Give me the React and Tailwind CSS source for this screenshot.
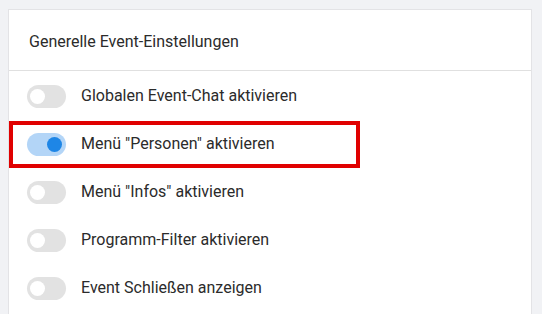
import React, { useState } from 'react';

const settings = [
  { label: 'Globalen Event-Chat aktivieren', on: false },
  { label: 'Menü "Personen" aktivieren', on: true, highlight: true },
  { label: 'Menü "Infos" aktivieren', on: false },
  { label: 'Programm-Filter aktivieren', on: false },
  { label: 'Event Schließen anzeigen', on: false },
];

const Toggle = ({ on, onClick }) => (
  <button
    onClick={onClick}
    className={`relative w-[39px] h-[23px] rounded-full shrink-0 ${on ? 'bg-[#b3d5f7]' : 'bg-[#e2e2e2]'}`}
  >
    <span
      className={`absolute top-[4px] w-[15px] h-[15px] rounded-full ${on ? 'left-[20px] bg-[#1e86e6]' : 'left-[3px] bg-white'}`}
    />
  </button>
);

const App = () => {
  const [items, setItems] = useState(settings);

  const flip = (i) => {
    setItems(items.map((it, idx) => (idx === i ? { ...it, on: !it.on } : it)));
  };

  return (
    <div className="w-[542px] h-[314px] bg-[#f1f2f5] pt-[9px] pl-[8px] pr-[10px] overflow-hidden" style={{ fontFamily: 'Roboto, "Liberation Sans", sans-serif' }}>
      <div className="bg-white border border-[#e3e3e6] h-[320px]">
        {/* Header */}
        <div className="h-[61px] flex items-center px-5 pt-[3px] border-b border-[#e0e0e0]">
          <span className="text-[16px] text-[#2b2b2b]">Generelle Event-Einstellungen</span>
        </div>

        {/* Settings list */}
        <div className="pt-[1px]">
          {items.map((it, i) => (
            <div key={it.label} className="relative h-[48px] flex items-center pl-[18px]">
              <Toggle on={it.on} onClick={() => flip(i)} />
              <span className="ml-[15px] text-[16px] text-[#2b2b2b]">{it.label}</span>
              {it.highlight && (
                <div className="absolute left-0 top-[1px] w-[351px] h-[47px] border-4 border-[#e00000] pointer-events-none" />
              )}
            </div>
          ))}
        </div>
      </div>
    </div>
  );
};

export default App;
